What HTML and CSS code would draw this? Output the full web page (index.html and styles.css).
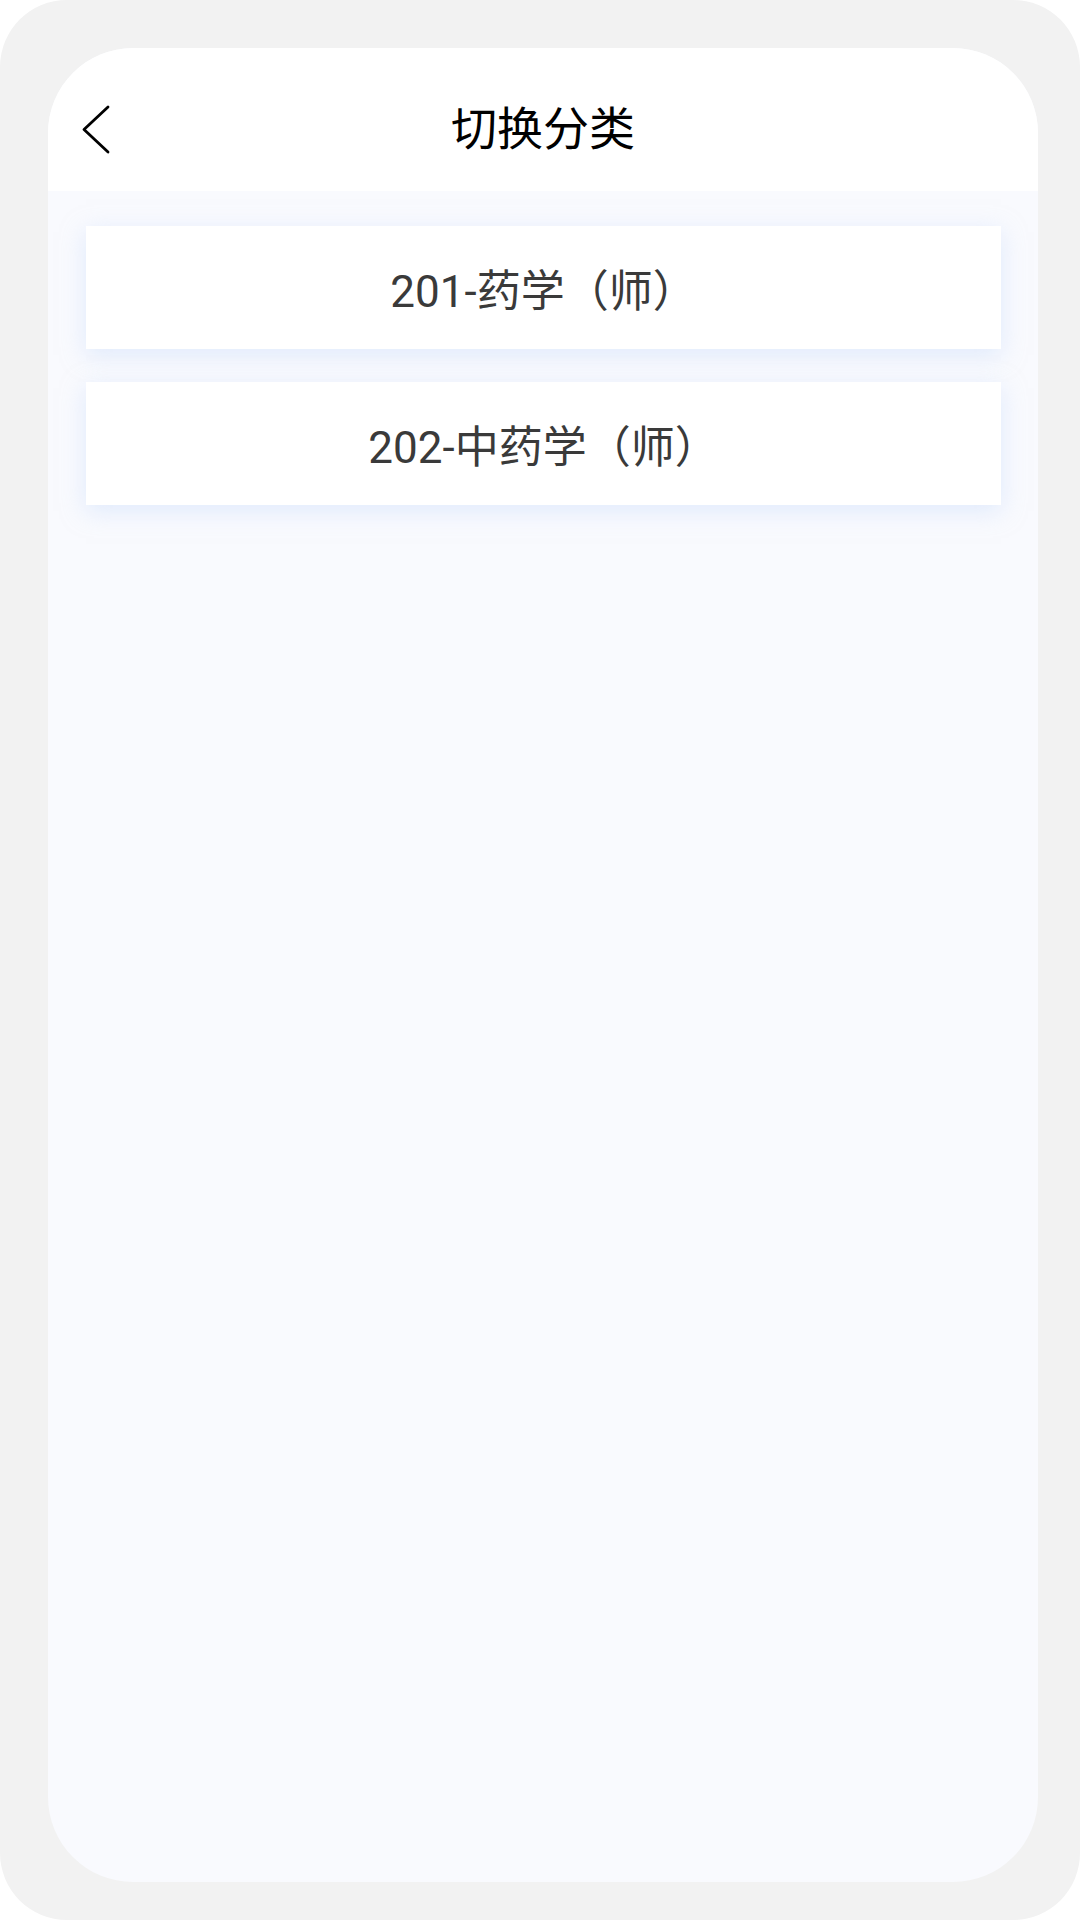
FILE: index.html
```html
<!DOCTYPE html>
<html lang="zh-CN">
<head>
  <meta charset="UTF-8" />
  <meta name="viewport" content="width=device-width, initial-scale=1.0" />
  <title>切换分类</title>
  <link rel="stylesheet" href="styles.css">
</head>
<body>
  <div class="device">
    <div class="screen">
      <header class="topbar">
        <div class="back">
          <svg width="28" height="49" viewBox="0 0 28 49">
            <path d="M26 2 L2 24.5 L26 47" fill="none" stroke="#000" stroke-width="2.8" stroke-linecap="round" stroke-linejoin="round"/>
          </svg>
        </div>
        <h1 class="title">切换分类</h1>
        <div></div>
      </header>

      <div class="list">
        <div class="item">201-药学（师）</div>
        <div class="item">202-中药学（师）</div>
      </div>
    </div>
  </div>
</body>
</html>
```

FILE: styles.css
```css
html, body {
  margin: 0;
  padding: 0;
  background: #fff;
}
body {
  font-family: "Noto Sans CJK SC", "Noto Sans", sans-serif;
  width: 1080px;
  height: 1920px;
}
.device {
  box-sizing: border-box;
  height: 1920px;
  background: #f2f2f2;
  border-radius: 67px;
  padding: 48px 42px 38px 48px;
}
.screen {
  height: 100%;
  background: #f9fafe;
  border-radius: 85px;
  overflow: hidden;
  display: flex;
  flex-direction: column;
}
.topbar {
  box-sizing: border-box;
  height: 143px;
  padding-top: 20px;
  background: #fff;
  display: grid;
  grid-template-columns: 1fr auto 1fr;
  align-items: center;
}
.back {
  padding-left: 34px;
  display: flex;
  align-items: center;
}
.back svg {
  display: block;
}
.title {
  margin: 0 0 10px;
  font-size: 46px;
  font-weight: 400;
  color: #000;
  line-height: 1;
}
.list {
  padding: 35px 37px 0 38px;
  display: flex;
  flex-direction: column;
  gap: 33px;
}
.item {
  height: 123px;
  background: #fff;
  display: flex;
  align-items: center;
  justify-content: center;
  font-family: Roboto, "Noto Sans CJK SC", sans-serif;
  font-size: 44px;
  color: #3a3a3a;
  text-spacing-trim: space-all;
  box-shadow: 0 6px 22px rgba(200, 220, 252, 0.5);
}
```
